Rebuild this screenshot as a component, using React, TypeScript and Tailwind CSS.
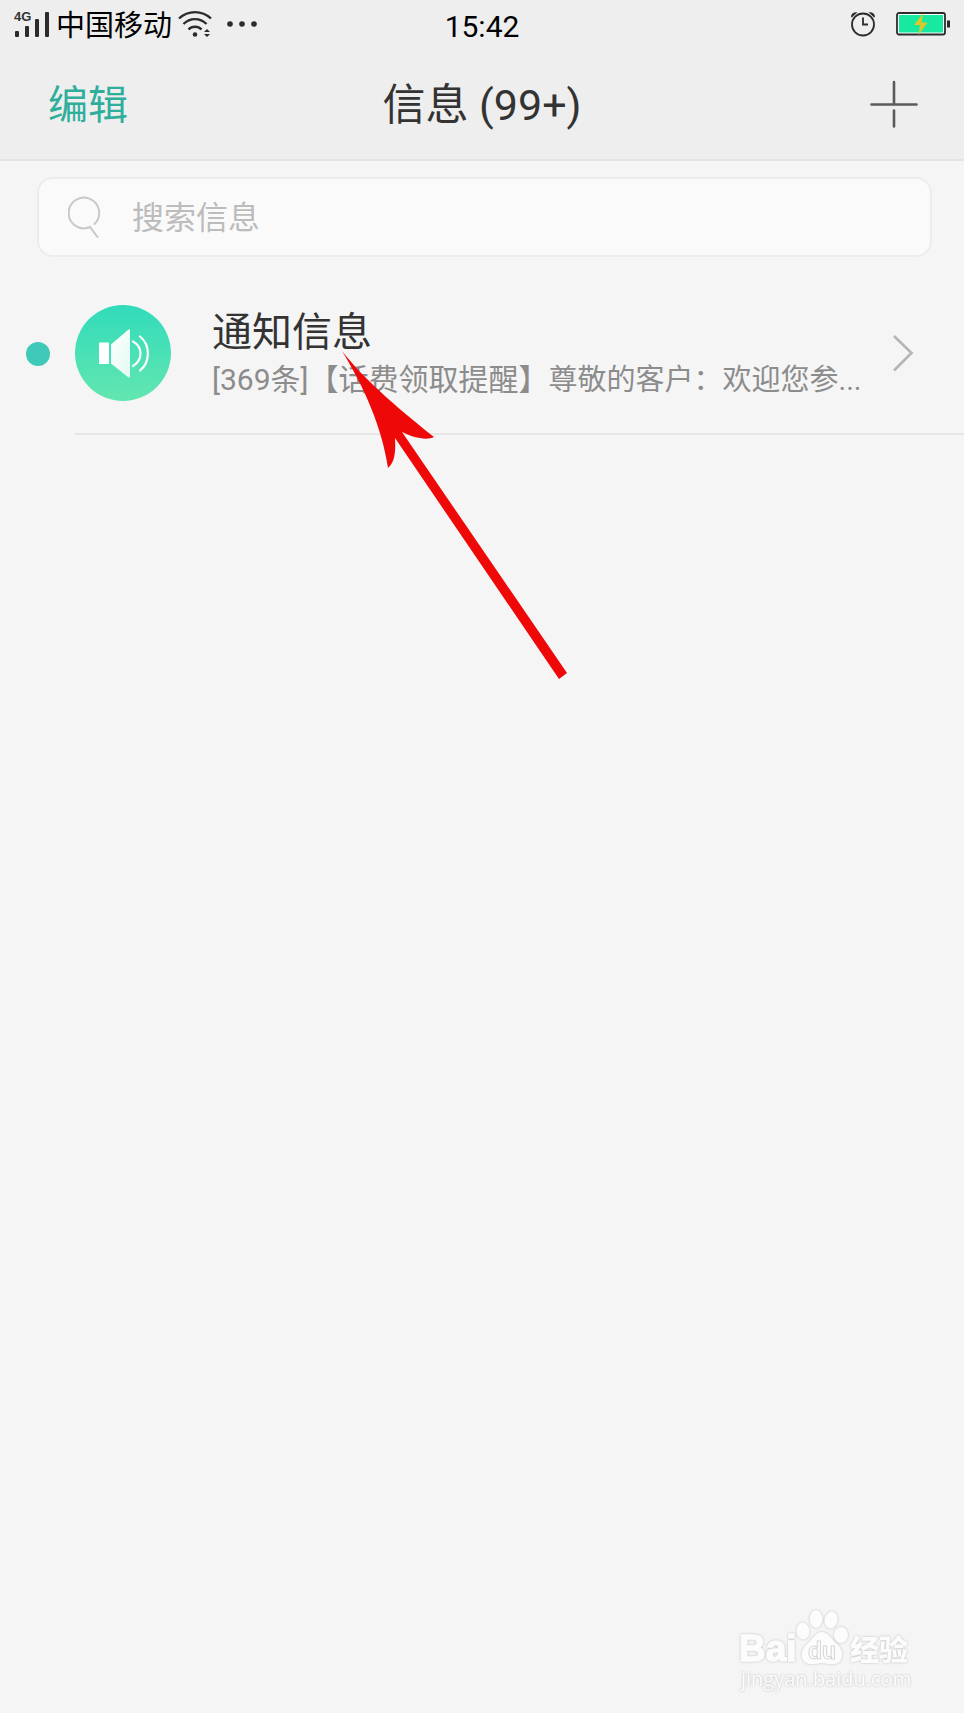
import * as React from "react";

const FONT = "font-[Roboto,'Noto_Sans_CJK_SC',sans-serif]";

/**
 * Signal strength with the network type above the short bars
 */
const SignalIcon: React.FC = () => (
  <svg width="36" height="28" viewBox="0 0 36 28" aria-label="4G" role="img">
    <text x="0" y="11" fontSize="13" fontWeight="700" fontFamily="Liberation Sans, sans-serif" fill="#333">
      4G
    </text>
    <rect x="1" y="21" width="4" height="6" rx="1" fill="#2b2b2b" />
    <rect x="11" y="16" width="4" height="11" rx="1" fill="#2b2b2b" />
    <rect x="21" y="9" width="4" height="18" rx="1" fill="#2b2b2b" />
    <rect x="31" y="2" width="4" height="25" rx="1" fill="#2b2b2b" />
  </svg>
);

const WifiIcon: React.FC = () => (
  <svg width="34" height="28" viewBox="0 0 34 28" fill="none" stroke="#2b2b2b" strokeWidth="2.4" aria-hidden="true">
    <path d="M1 8.5C10 0 24 0 33 8.5" />
    <path d="M5.500 14C12 7.500 22 7.500 28.500 14" />
    <path d="M10.500 19.500C14 15.800 20 15.800 23.500 19.500" />
    <circle cx="17" cy="24.500" r="2.300" fill="#2b2b2b" stroke="none" />
    <path d="M26 22L29 19L32 22ZM26 24L29 27L32 24Z" fill="#2b2b2b" stroke="none" />
  </svg>
);

const AlarmIcon: React.FC = () => (
  <svg width="26" height="26" viewBox="0 0 26 26" fill="none" stroke="#2b2b2b" strokeWidth="1.8" aria-hidden="true">
    <circle cx="13" cy="13.500" r="11" />
    <path d="M13 6.500V13.500H18" />
    <path d="M1 6C1 2.500 3.500 0.800 7.500 1.200L1.800 6.500ZM25 6C25 2.500 22.500 0.800 18.500 1.200L24.200 6.500Z" fill="#2b2b2b" stroke="none" />
  </svg>
);

const BatteryIcon: React.FC = () => (
  <svg width="54" height="24" viewBox="0 0 54 24" aria-hidden="true">
    <rect x="1" y="1" width="48" height="21.500" rx="2" fill="#fff" stroke="#2b2b2b" strokeWidth="1.800" />
    <rect x="3" y="3" width="44" height="17.500" fill="#17e9a0" />
    <rect x="51" y="8.500" width="3" height="7" fill="#2b2b2b" />
    <path d="M27.500 1L18 13H24L22.500 23L31.500 10.500H25.500Z" fill="#dcc828" />
  </svg>
);

const SearchIcon: React.FC = () => (
  <svg width="32" height="42" viewBox="0 0 32 42" fill="none" stroke="#c8c8c8" strokeWidth="2" strokeLinecap="round" aria-hidden="true">
    <path d="M26.500 28A15.300 15.300 0 1 0 22 31L29.500 41" />
  </svg>
);

const SpeakerAvatar: React.FC = () => (
  <svg width="96" height="96" viewBox="0 0 96 96" className="shrink-0" aria-hidden="true">
    <defs>
      <linearGradient id="avatar-fill" x1="0" y1="0" x2="0" y2="1">
        <stop offset="0" stopColor="#31dbbb" />
        <stop offset="1" stopColor="#63e6b0" />
      </linearGradient>
      <linearGradient id="horn-fill" x1="0" y1="0" x2="1" y2="1">
        <stop offset="0" stopColor="#fff" />
        <stop offset="1" stopColor="#e2faf2" />
      </linearGradient>
    </defs>
    <circle cx="48" cy="48" r="48" fill="url(#avatar-fill)" />
    <rect x="24" y="37.500" width="10" height="21.500" rx="1" fill="#fff" />
    <path d="M36 39.500L53.500 24.500Q55 23.500 55 25.500V71Q55 73.500 53.500 72.500L36 58.500Z" fill="url(#horn-fill)" />
    <g fill="none" stroke="#fff" strokeWidth="2.200" strokeLinecap="round">
      <path d="M58 36.500C68 42 68 55 58 61" />
      <path d="M65 31.500C75.500 40 75.500 57 65 65.500" />
    </g>
  </svg>
);

/**
 * Pointer drawn over the list, its tip rests under the row title
 */
const PointerArrow: React.FC = () => (
  <svg
    width="226"
    height="330"
    viewBox="0 0 226 330"
    className="pointer-events-none absolute left-[342px] top-[78px]"
    aria-hidden="true"
  >
    <path
      d="M0 0C24 31 62 62 92 86C84 90 70 86 60 81L225 322L217 328L53 87C54 103 52 112 46 117C40 76 22 36 0 0Z"
      fill="#ee0808"
    />
  </svg>
);

const Watermark: React.FC = () => (
  <svg
    width="180"
    height="96"
    viewBox="0 0 180 96"
    className="drop-shadow-[0_0_1px_#bdbdbd]"
    fill="#fcfcfc"
    fontFamily="Liberation Sans, sans-serif"
  >
    <text x="3" y="56" fontSize="37" fontWeight="700" stroke="#fcfcfc" strokeWidth="1.500">Bai</text>
    <ellipse cx="67" cy="26" rx="6.500" ry="8.500" transform="rotate(-8 67 26)" />
    <ellipse cx="80" cy="14" rx="6.500" ry="9" />
    <ellipse cx="95" cy="15" rx="6.500" ry="8.500" transform="rotate(12 95 15)" />
    <ellipse cx="105" cy="30" rx="7" ry="8" />
    <path d="M86 27C93 27 95 34 101 39C109 46 108 58 98 59C93 60 90 58 86 58C82 58 79 60 74 59C64 58 63 46 71 39C77 34 79 27 86 27Z" />
    <text x="72" y="54" fontSize="23" fontWeight="700" stroke="#d6d6d6" strokeWidth="1">du</text>
    <text x="114" y="56" fontSize="29" fontWeight="900" fontFamily="Noto Sans CJK SC, sans-serif">经验</text>
    <text x="5" y="81" fontSize="20" fontFamily="Open Sans, sans-serif">jingyan.baidu.com</text>
  </svg>
);

const StatusBar: React.FC = () => (
  <div className="grid h-12 grid-cols-[1fr_auto_1fr] items-center px-3.5">
    <div className="flex items-center gap-1.5">
      <SignalIcon />
      <span className="pt-1 text-[29px] leading-8 text-black">中国移动</span>
      <WifiIcon />
      <svg width="32" height="6" viewBox="0 0 32 6" className="ml-2" fill="#2b2b2b" aria-hidden="true">
        <circle cx="4" cy="3" r="2.800" />
        <circle cx="16" cy="3" r="2.800" />
        <circle cx="28" cy="3" r="2.800" />
      </svg>
    </div>
    <time className="pt-1.5 text-[30px] leading-8 text-black">15:42</time>
    <div className="flex items-center justify-end gap-5">
      <AlarmIcon />
      <BatteryIcon />
    </div>
  </div>
);

const App: React.FC = () => {
  return (
    <div className={`flex min-h-screen flex-col bg-[#f5f5f5] ${FONT}`}>
      <header className="border-b-2 border-[#e4e4e4] bg-[#eeeeee]">
        <StatusBar />
        <nav className="grid h-[111px] grid-cols-[1fr_auto_1fr] items-center px-12">
          <button type="button" className="justify-self-start pt-1 text-[40px] text-[#2fae9c]">
            编辑
          </button>
          <h1 className="pt-1 text-[43px] text-[#333333]">信息 (99+)</h1>
          <button type="button" aria-label="新建信息" className="-mr-0.5 justify-self-end">
            <svg width="48" height="48" viewBox="0 0 48 48" stroke="#5a5a5a" strokeWidth="2.600" strokeLinecap="round">
              <path d="M1.500 24.500H46.500M24 2V24M24 30.500V46.500" />
            </svg>
          </button>
        </nav>
      </header>

      <main>
        <div className="pt-4 pr-8 pb-4 pl-[37px]">
          <label className="flex h-20 items-center gap-8 rounded-2xl border-2 border-[#ececec] bg-[#fafafa] px-[29px]">
            <SearchIcon />
            <input
              type="search"
              aria-label="搜索信息"
              placeholder="搜索信息"
              className="min-w-0 flex-1 bg-transparent pt-0.5 text-[32px] outline-none placeholder:text-[#bcbcbc]"
            />
          </label>
        </div>

        <ul className="relative">
          <li className="pl-[26px]">
            <a href="#notifications" className="flex items-center">
              <span className="mr-[25px] size-6 shrink-0 rounded-full bg-[#3fc9b9]" />
              <div className="flex h-[162px] min-w-0 flex-1 items-center border-b-2 border-[#e6e6e6] pr-[50px]">
                <SpeakerAvatar />
                <div className="ml-[41px] min-w-0 flex-1 pt-1.5">
                  <h2 className="text-[40px] leading-[48px] text-[#333333]">通知信息</h2>
                  <p className="text-[30px] leading-[46px] whitespace-nowrap text-[#8c8c8c]">
                    [369条]【话费领取提醒】<span className="text-[29px]">尊敬的客户：欢迎您参...</span>
                  </p>
                </div>
                <svg width="22" height="40" viewBox="0 0 22 40" fill="none" stroke="#b5b5b5" strokeWidth="2.600" aria-hidden="true">
                  <path d="M2 3L19.500 20L2 37.500" />
                </svg>
              </div>
            </a>
          </li>
          <PointerArrow />
        </ul>
      </main>

      <footer className="mt-auto flex justify-end pr-[48px] pb-[12px]">
        <Watermark />
      </footer>
    </div>
  );
};

export default App;
